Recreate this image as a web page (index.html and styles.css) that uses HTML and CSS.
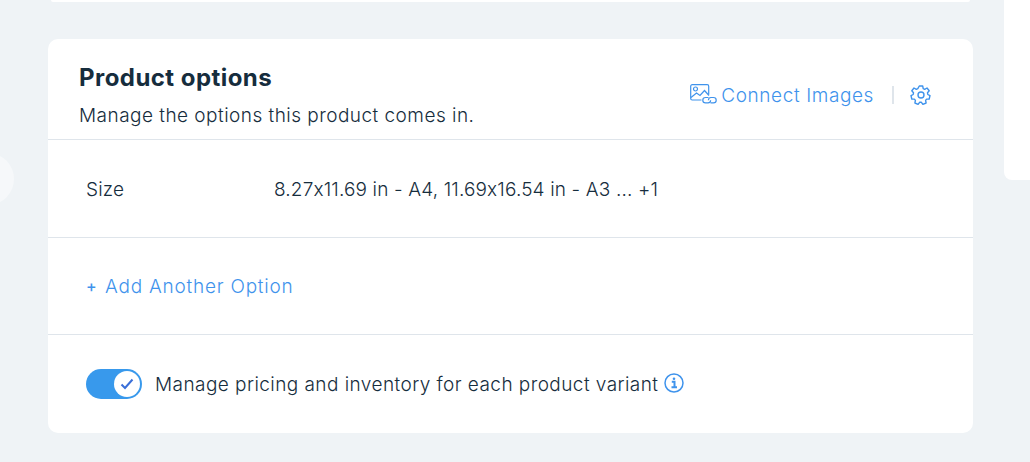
FILE: index.html
```html
<!DOCTYPE html>
<html lang="en">
<head>
<meta charset="utf-8">
<title>Product options</title>
<link rel="stylesheet" href="styles.css">
</head>
<body>
<div class="page">
  <span class="edge-circle"></span>
  <main class="main">
    <div class="card-stub"></div>
    <section class="card">
      <header class="card-head">
        <div class="head-text">
          <h2 class="title">Product options</h2>
          <p class="subtitle">Manage the options this product comes in.</p>
        </div>
        <div class="head-actions">
          <a class="link connect">
            <svg class="icon-connect" width="27" height="20" viewBox="0 0 27 20" fill="none" stroke="currentColor" stroke-width="1.200">
              <path d="M11.500 16H2.200A1.500 1.500 0 0 1 .7 14.500V2.200A1.500 1.500 0 0 1 2.200 .7h15A1.500 1.500 0 0 1 18.700 2.200V10.500"/>
              <circle cx="5.500" cy="5" r="2"/>
              <path d="M1 13.500l5.500-4.500 3.500 2.500 4.500-5 4.500 5"/>
              <path d="M18.500 13.500h-3a2.700 2.700 0 0 0 0 5.400h2.500a2.700 2.700 0 0 0 2.600-2.700"/>
              <path d="M20.500 18.900h3a2.700 2.700 0 0 0 0-5.400H21a2.700 2.700 0 0 0-2.600 2.700"/>
            </svg>
            <span>Connect Images</span>
          </a>
          <span class="divider"></span>
          <svg class="icon-gear" width="22" height="22" viewBox="0 0 22 22" fill="none" stroke="currentColor" stroke-width="1.400" stroke-linejoin="round">
            <path d="M9.300 2h3.400l.5 2.600 1.500.7 2.300-1.300 2.200 2.800-1.700 2 .3 1.700 2.200 1.200-.8 3.300-2.600.1-1 1.300.5 2.600-3.200 1.400-1.500-2.100h-1.800l-1.500 2.100-3.200-1.400.5-2.600-1-1.300-2.600-.1-.8-3.300 2.200-1.200.3-1.700-1.700-2 2.200-2.800 2.300 1.300 1.500-.7z"/>
            <circle cx="11" cy="11" r="3"/>
          </svg>
        </div>
      </header>
      <div class="row option-row">
        <span class="option-name">Size</span>
        <span class="option-values">8.27x11.69 in - A4, 11.69x16.54 in - A3 ... +1</span>
      </div>
      <div class="row add-row">
        <a class="link add"><span class="plus">+</span><span>Add Another Option</span></a>
      </div>
      <div class="toggle-row">
        <span class="toggle">
          <span class="knob">
            <svg width="16" height="14" viewBox="0 0 16 14" fill="none" stroke-width="2">
              <path d="M2.500 7.500l3.500 3.500 7.500-8.500" stroke="#3a6fd8"/>
            </svg>
          </span>
        </span>
        <span class="toggle-label">Manage pricing and inventory for each product variant</span>
        <svg class="icon-info" width="20" height="20" viewBox="0 0 20 20" fill="none" stroke="currentColor">
          <circle cx="10" cy="10" r="9" stroke-width="1.500"/>
          <path d="M7.800 8.800H10.500V14M7.500 14.300h5.500" stroke-width="2"/>
          <circle cx="10" cy="5.800" r="1.300" fill="currentColor" stroke="none"/>
        </svg>
      </div>
    </section>
  </main>
  <aside class="side"></aside>
</div>
</body>
</html>
```
FILE: styles.css
```css
* { box-sizing: border-box; }
html, body { margin: 0; height: 100%; }
body {
  background: #eff3f6;
  font-family: "Inter", "Noto Sans", sans-serif;
  font-feature-settings: "calt" 0;
  color: #162d3d;
  overflow: hidden;
}
.page {
  position: relative;
  display: flex;
  align-items: flex-start;
  height: 462px;
  padding-left: 48px;
}
.edge-circle {
  position: absolute;
  left: -38px;
  top: 153px;
  width: 52px;
  height: 52px;
  border-radius: 50%;
  background: #f6f8fa;
}
.main { width: 925px; flex: none; }
.card-stub {
  height: 2px;
  margin: 0 3px 37px;
  background: #fff;
  border-radius: 0 0 8px 8px;
}
.card {
  height: 394px;
  background: #fff;
  border-radius: 10px;
  display: flex;
  flex-direction: column;
}
.card-head {
  height: 101px;
  padding: 24px 41px 0 31px;
  display: flex;
  justify-content: space-between;
  border-bottom: 1px solid #dfe5eb;
}
.title {
  margin: 0 0 11px;
  font-size: 24px;
  line-height: 30px;
  font-weight: 700;
  letter-spacing: 0.45px;
}
.subtitle {
  margin: 0;
  font-size: 19px;
  line-height: 24px;
  letter-spacing: 0.47px;
  font-weight: 350;
}
.head-actions {
  display: flex;
  align-items: center;
  color: #3f93ec;
  height: 64px;
}
.link {
  display: flex;
  align-items: center;
  color: #3f93ec;
  font-size: 19px;
  letter-spacing: 0.77px;
  font-weight: 350;
}
.connect { letter-spacing: 0.6px; }
.icon-connect { margin: 0 4px 2px 0; }
.divider {
  width: 2px;
  height: 18px;
  margin: 0 16px 0 18px;
  background: #dfe5eb;
}
.row {
  height: 98px;
  padding: 1px 0 0 38px;
  display: flex;
  align-items: center;
  border-bottom: 1px solid #dfe5eb;
  font-size: 19px;
  font-weight: 350;
}
.option-name { width: 188px; letter-spacing: 0.15px; }
.option-values { letter-spacing: 0.15px; }
.add-row { height: 97px; padding-top: 0; }
.plus { width: 19px; font-size: 16px; font-weight: 500; }
.toggle-row {
  flex: 1;
  padding-left: 38px;
  display: flex;
  align-items: center;
  font-size: 19px;
  font-weight: 350;
  letter-spacing: 0.44px;
}
.toggle {
  width: 56px;
  height: 30px;
  border-radius: 15px;
  background: #3899ec;
  display: flex;
  justify-content: flex-end;
  align-items: center;
  padding-right: 2px;
}
.knob {
  width: 26px;
  height: 26px;
  border-radius: 50%;
  background: #fff;
  display: flex;
  align-items: center;
  justify-content: center;
}
.toggle-label { margin-left: 13px; }
.icon-info { margin: 0 0 2px 6px; color: #3f93ec; }
.side {
  flex: none;
  width: 60px;
  height: 180px;
  margin-left: 31px;
  background: #fff;
  border-radius: 0 0 0 8px;
}
```
